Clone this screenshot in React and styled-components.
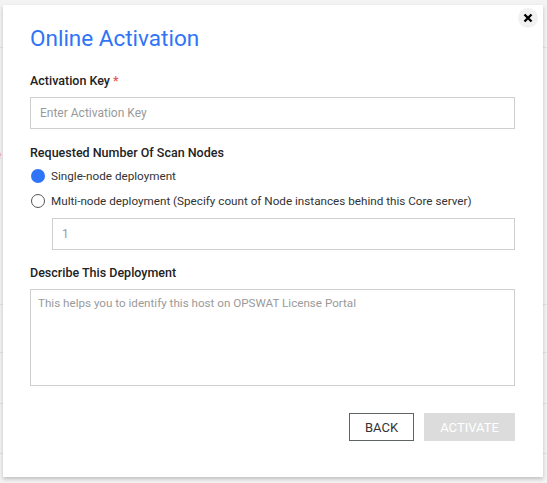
import React from "react";
import styled, { createGlobalStyle } from "styled-components";

const GlobalStyle = createGlobalStyle`
  html, body {
    margin: 0;
    padding: 0;
    background: #f3f3f3;
    font-family: Roboto, "Liberation Sans", Arial, sans-serif;
  }
  * {
    box-sizing: border-box;
  }
`;

const Page = styled.div`
  position: relative;
  width: 547px;
  height: 483px;
  overflow: hidden;
  background: #f3f3f3;
`;

const BackRow = styled.div`
  height: ${(props) => props.h}px;
  border-bottom: 1px solid #e2e2e2;
`;

const BackError = styled.div`
  margin: 100px 0 0 -5px;
  font-size: 12px;
  color: #f0a49c;
`;

const Modal = styled.div`
  position: absolute;
  left: 3px;
  top: 5px;
  width: 540px;
  height: 472px;
  background: #fff;
  box-shadow: 0 2px 4px rgba(0, 0, 0, 0.22);
  padding: 19px 28px 0 27px;
  display: flex;
  flex-direction: column;
`;

const Close = styled.button`
  position: absolute;
  top: 3px;
  right: 5px;
  width: 20px;
  height: 20px;
  border: none;
  border-radius: 50%;
  background: #f1f1f1;
  padding: 0;
  display: flex;
  align-items: center;
  justify-content: center;
`;

const Title = styled.h1`
  margin: 0;
  font-size: 22.5px;
  line-height: 28px;
  font-weight: 400;
  color: #2f74f6;
`;

const Label = styled.div`
  font-size: 12.5px;
  font-weight: 500;
  color: #222;
  line-height: 16px;
  margin-top: ${(props) => props.mt || 0}px;
`;

const Star = styled.span`
  color: #e8574d;
`;

const TextInput = styled.div`
  height: 32px;
  border: 1px solid #cfcfcf;
  margin-top: ${(props) => props.mt || 0}px;
  margin-left: ${(props) => props.ml || 0}px;
  padding: 0 9px;
  display: flex;
  align-items: center;
  font-size: 12px;
  color: #9a9a9a;
`;

const TextArea = styled.div`
  height: 97px;
  border: 1px solid #cfcfcf;
  margin-top: 8px;
  padding: 5px 7px;
  font-size: 11.65px;
  line-height: 16px;
  color: #9a9a9a;
`;

const RadioRow = styled.div`
  display: flex;
  align-items: center;
  gap: 6px;
  margin-top: ${(props) => props.mt || 0}px;
  font-size: 11.7px;
  color: #333;
  line-height: 16px;
`;

const RadioDot = styled.span`
  width: 14px;
  height: 14px;
  border-radius: 50%;
  margin-left: 1px;
  flex: none;
  background: ${(props) => (props.checked ? "#2f74f6" : "#fff")};
  border: ${(props) => (props.checked ? "none" : "1.5px solid #555")};
`;

const Footer = styled.div`
  display: flex;
  justify-content: flex-end;
  gap: 10px;
  margin-top: 27px;
`;

const Button = styled.button`
  height: 28px;
  padding: 0;
  width: ${(props) => props.w}px;
  font-family: inherit;
  font-size: 13px;
  text-transform: uppercase;
  border: ${(props) => (props.primary ? "none" : "1px solid #5f6566")};
  background: ${(props) => (props.primary ? "#dcdcdc" : "#fff")};
  color: ${(props) => (props.primary ? "#fff" : "#333")};
`;

export default function App() {
  return (
    <Page>
      <GlobalStyle />
      <BackRow h={48} />
      <BackRow h={157}>
        <BackError>e</BackError>
      </BackRow>
      <BackRow h={48} />
      <BackRow h={51} />
      <BackRow h={50} />
      <BackRow h={49} />
      <BackRow h={48} />
      <Modal>
        <Close aria-label="close">
          <svg width="10" height="10" viewBox="0 0 10 10">
            <path d="M1.5 1.5 L8.5 8.5 M8.5 1.5 L1.5 8.5" stroke="#000" strokeWidth="2.4" />
          </svg>
        </Close>
        <Title>Online Activation</Title>
        <Label mt={21}>
          Activation Key <Star>*</Star>
        </Label>
        <TextInput mt={8}>Enter Activation Key</TextInput>
        <Label mt={16}>Requested Number Of Scan Nodes</Label>
        <RadioRow mt={7}>
          <RadioDot checked />
          Single-node deployment
        </RadioRow>
        <RadioRow mt={9}>
          <RadioDot />
          Multi-node deployment (Specify count of Node instances behind this Core server)
        </RadioRow>
        <TextInput mt={9} ml={22}>1</TextInput>
        <Label mt={15}>Describe This Deployment</Label>
        <TextArea>This helps you to identify this host on OPSWAT License Portal</TextArea>
        <Footer>
          <Button w={65}>Back</Button>
          <Button w={91} primary>
            Activate
          </Button>
        </Footer>
      </Modal>
    </Page>
  );
}
